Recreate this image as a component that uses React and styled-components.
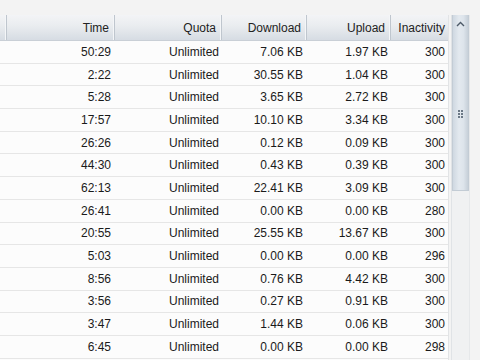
import React from 'react'
import styled, { createGlobalStyle } from 'styled-components'

const Global = createGlobalStyle`
  html, body {
    margin: 0;
    padding: 0;
    background: #f3f3f3;
    overflow: hidden;
  }
  body {
    font-family: "Liberation Sans", Arial, sans-serif;
  }
`

const COLS = '7px 108px 107px 85px 84px 57px'

const sessions = [
  ['50:29', '7.06 KB', '1.97 KB', 300],
  ['2:22', '30.55 KB', '1.04 KB', 300],
  ['5:28', '3.65 KB', '2.72 KB', 300],
  ['17:57', '10.10 KB', '3.34 KB', 300],
  ['26:26', '0.12 KB', '0.09 KB', 300],
  ['44:30', '0.43 KB', '0.39 KB', 300],
  ['62:13', '22.41 KB', '3.09 KB', 300],
  ['26:41', '0.00 KB', '0.00 KB', 280],
  ['20:55', '25.55 KB', '13.67 KB', 300],
  ['5:03', '0.00 KB', '0.00 KB', 296],
  ['8:56', '0.76 KB', '4.42 KB', 300],
  ['3:56', '0.27 KB', '0.91 KB', 300],
  ['3:47', '1.44 KB', '0.06 KB', 300],
  ['6:45', '0.00 KB', '0.00 KB', 298],
  ['', '', '', '']
]

const Screen = styled.div`
  width: 480px;
  height: 360px;
  padding-top: 15px;
  box-sizing: border-box;
  overflow: hidden;
`

const Frame = styled.div`
  display: flex;
  align-items: stretch;
  gap: 2px;
  height: 345px;
`

const Table = styled.div`
  width: 449px;
  background: #fbfbfb;
  border-right: 1px solid #e2e4e6;
  box-sizing: border-box;
`

const HeaderRow = styled.div`
  display: grid;
  grid-template-columns: ${COLS};
  height: 26px;
  background: linear-gradient(#f3f4f6 0%, #e9ecef 45%, #d6dce3 100%);
  border-bottom: 1px solid #c9cfd6;
  box-sizing: border-box;
`

const HeaderCell = styled.div`
  display: flex;
  align-items: center;
  justify-content: flex-end;
  padding-right: 5px;
  font-size: 12px;
  color: #222;
  border-right: 1px solid #bfc6ce;
  box-shadow: inset -1px 0 0 #f4f6f8;
  white-space: nowrap;
  overflow: hidden;
  &:last-child {
    border-right: none;
    box-shadow: none;
    padding-right: 3px;
  }
`

const Row = styled.div`
  display: grid;
  grid-template-columns: ${COLS};
  height: 22.7px;
  background: #fcfcfc;
  border-bottom: 1px solid #e6e6e6;
  box-sizing: border-box;
`

const Cell = styled.div`
  display: flex;
  align-items: center;
  justify-content: flex-end;
  padding-right: ${({ $pad }) => $pad || 4}px;
  font-size: 12px;
  color: #1a1a1a;
  white-space: nowrap;
`

const Scrollbar = styled.div`
  width: 19px;
  display: flex;
  flex-direction: column;
  background: #f0f1f2;
  border-left: 1px solid #e0e3e6;
  border-right: 1px solid #e6e8ea;
  box-sizing: border-box;
`

const Thumb = styled.div`
  height: 176px;
  display: flex;
  flex-direction: column;
  align-items: center;
  background: linear-gradient(90deg, #cfd8e1 0%, #e3e9ef 40%, #dde4eb 70%, #c7d0d9 100%);
  border: 1px solid #c3ccd5;
  border-top: none;
  box-sizing: border-box;
`

const ArrowBox = styled.div`
  height: 18px;
  display: flex;
  align-items: center;
  justify-content: center;
`

const Grip = styled.div`
  margin-top: 77px;
  display: grid;
  grid-template-columns: repeat(2, 2px);
  gap: 1px;
  & > span {
    width: 2px;
    height: 2px;
    background: #6b7886;
  }
`

export default function App () {
  return (
    <Screen>
      <Global />
      <Frame>
        <Table>
          <HeaderRow>
            <HeaderCell />
            <HeaderCell>Time</HeaderCell>
            <HeaderCell>Quota</HeaderCell>
            <HeaderCell>Download</HeaderCell>
            <HeaderCell>Upload</HeaderCell>
            <HeaderCell>Inactivity</HeaderCell>
          </HeaderRow>
          {sessions.map((s, i) => (
            <Row key={i}>
              <Cell />
              <Cell>{s[0]}</Cell>
              <Cell $pad={3}>{s[0] ? 'Unlimited' : ''}</Cell>
              <Cell>{s[1]}</Cell>
              <Cell $pad={3}>{s[2]}</Cell>
              <Cell $pad={3}>{s[3]}</Cell>
            </Row>
          ))}
        </Table>
        <Scrollbar>
          <Thumb>
            <ArrowBox>
              <svg width='9' height='6' viewBox='0 0 9 6'>
                <path d='M1 5 L4.5 1.5 L8 5' fill='none' stroke='#4d5a68' strokeWidth='1.4' />
              </svg>
            </ArrowBox>
            <Grip>
              <span /><span /><span /><span /><span /><span />
            </Grip>
          </Thumb>
        </Scrollbar>
      </Frame>
    </Screen>
  )
}
